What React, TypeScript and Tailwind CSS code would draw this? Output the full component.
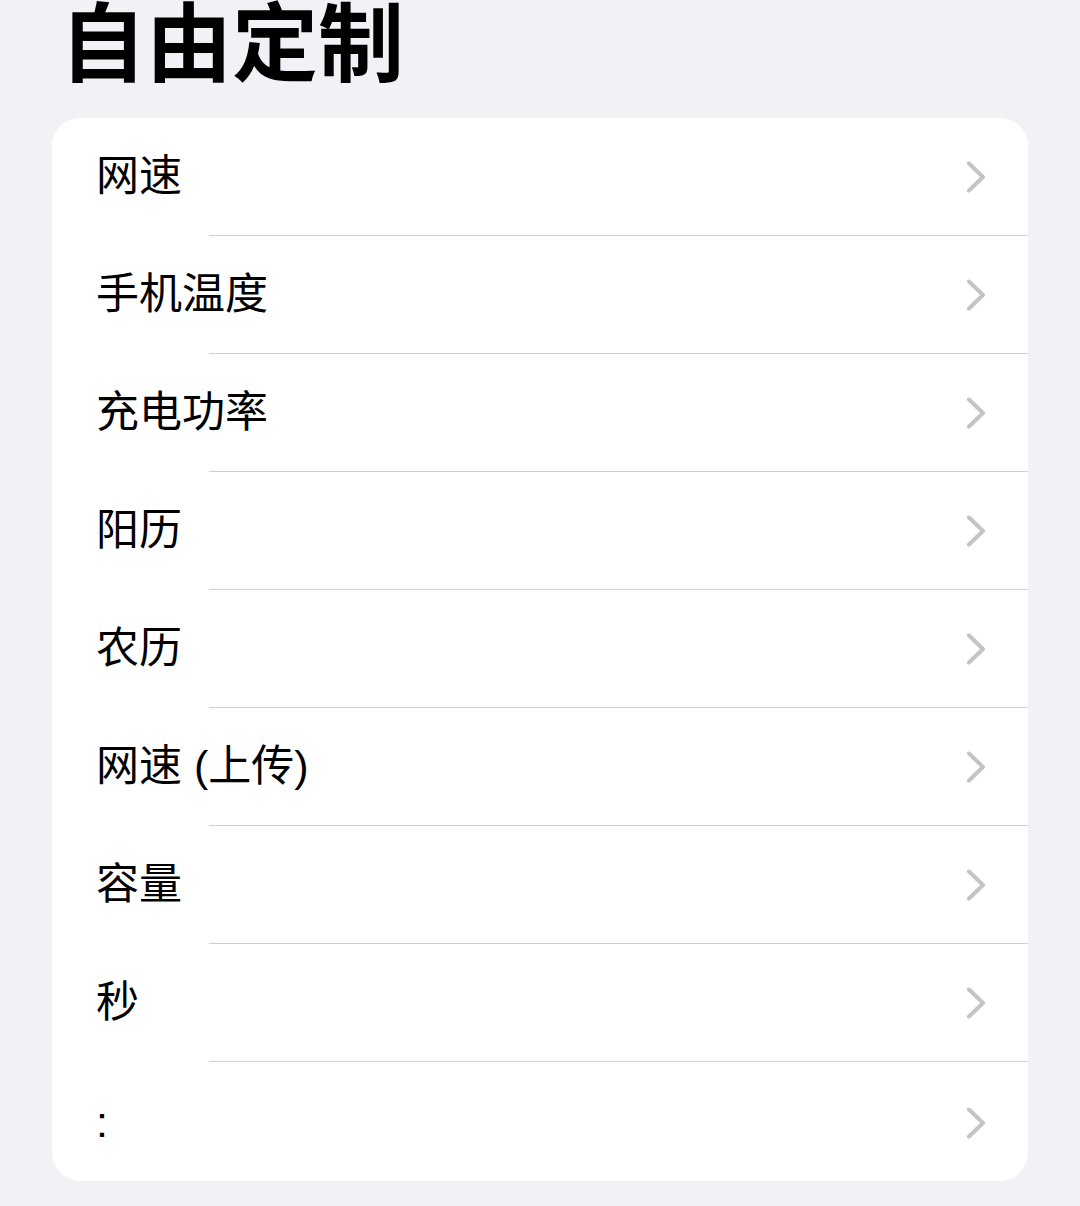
import React from 'react';

const items = ['网速', '手机温度', '充电功率', '阳历', '农历', '网速 (上传)', '容量', '秒', ':'];

const Chevron = () => (
  <svg width="20" height="32" viewBox="0 0 20 32" fill="none">
    <polyline points="3,2.5 17,16 3,29.5" stroke="#c4c4c7" strokeWidth="4" strokeLinecap="round" strokeLinejoin="round" />
  </svg>
);

export default function App() {
  return (
    <div
      className="min-h-[1206px] w-[1080px] bg-[#f2f2f6] text-black overflow-hidden"
      style={{ fontFamily: '"Liberation Sans", "Noto Sans CJK SC", sans-serif' }}
    >
      <h1 className="pl-[60px] h-[116px] mt-[2px] text-[86px] font-bold leading-none">
        自由定制
      </h1>
      <div className="mx-[52px] rounded-[28px] bg-white overflow-hidden">
        {items.map((label, i) => {
          const last = i === items.length - 1;
          return (
            <div key={label}>
              <div
                className={`flex items-center justify-between pl-[44px] pr-[42px] ${
                  last ? 'h-[119px] pt-[2px]' : 'h-[117px]'
                }`}
              >
                <span className="text-[43px] leading-none">{label}</span>
                <Chevron />
              </div>
              {!last && <div className="ml-[157px] h-px bg-[#d1d1d5]" />}
            </div>
          );
        })}
      </div>
    </div>
  );
}
